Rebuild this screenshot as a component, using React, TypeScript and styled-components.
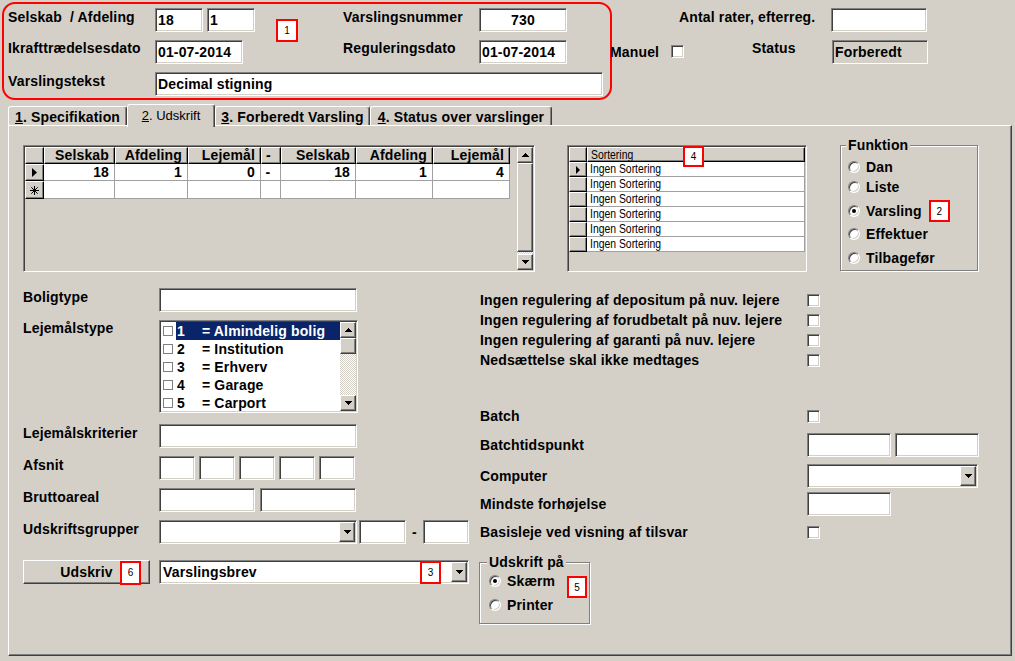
import React from 'react'
import styled, { createGlobalStyle, css } from 'styled-components'

const FACE = '#d4d0c8'
const SHADOW = '#808080'
const DARK = '#404040'
const GRIDLINE = '#a0a0a0'

const GlobalStyle = createGlobalStyle`
  html, body {
    margin: 0;
    padding: 0;
    background: ${FACE};
  }
  body {
    font-family: "Liberation Sans", Arial, sans-serif;
    font-size: 14px;
    font-weight: bold;
    letter-spacing: 0.15px;
    color: #000;
  }
`

// classic 3D edges
const sunken = css`
  box-sizing: border-box;
  border: 1px solid;
  border-color: ${SHADOW} #fff #fff ${SHADOW};
  box-shadow: inset 1px 1px 0 ${DARK}, inset -1px -1px 0 ${FACE};
`

const raised = css`
  box-sizing: border-box;
  border: 1px solid;
  border-color: #fff ${DARK} ${DARK} #fff;
  box-shadow: inset -1px -1px 0 ${SHADOW};
  background: ${FACE};
`

const Window = styled.div`
  width: 1015px;
  height: 661px;
  overflow: hidden;
  background: ${FACE};
`

/* ---------- header ---------- */

const Header = styled.div`
  box-sizing: border-box;
  display: flex;
  height: 104px;
  padding: 2px 0 0 2px;
`

const RedFrame = styled.div`
  box-sizing: border-box;
  width: 610px;
  height: 98px;
  border: 2px solid #ff0000;
  border-radius: 13px;
  padding: 4px 0 0 4px;
  display: flex;
  flex-direction: column;
  gap: 8px;
`

const FieldRow = styled.div<{ $pl?: number }>`
  display: flex;
  align-items: flex-start;
  height: 24px;
  padding-left: ${(p) => p.$pl ?? 0}px;
`

const Label = styled.div<{ $w: number; $ml?: number; $pt?: number }>`
  width: ${(p) => p.$w}px;
  margin-left: ${(p) => p.$ml ?? 0}px;
  padding-top: ${(p) => p.$pt ?? 1}px;
  flex-shrink: 0;
  line-height: 16px;
  white-space: pre;
`

const TextBox = styled.div<{ $w: number; $ml?: number; $align?: string; $gray?: boolean }>`
  ${sunken};
  width: ${(p) => p.$w}px;
  height: 24px;
  margin-left: ${(p) => p.$ml ?? 0}px;
  flex-shrink: 0;
  padding: 0 2px;
  background: ${(p) => (p.$gray ? FACE : '#fff')};
  line-height: 22px;
  text-align: ${(p) => p.$align ?? 'left'};
  white-space: nowrap;
  overflow: hidden;
`

const Badge = styled.div<{ $w?: number; $h?: number; $ml?: number; $mt?: number }>`
  box-sizing: border-box;
  width: ${(p) => p.$w ?? 22}px;
  height: ${(p) => p.$h ?? 23}px;
  margin-left: ${(p) => p.$ml ?? 0}px;
  margin-top: ${(p) => p.$mt ?? 0}px;
  flex-shrink: 0;
  border: 2px solid #ff0000;
  background: #fff;
  font-family: "Liberation Sans", Arial, sans-serif;
  font-size: 10px;
  font-weight: normal;
  letter-spacing: 0;
  display: flex;
  align-items: center;
  justify-content: center;
`

const OverBadge = styled(Badge)<{ $left?: number; $right?: number; $top: number }>`
  position: absolute;
  top: ${(p) => p.$top}px;
  ${(p) => (p.$left !== undefined ? `left: ${p.$left}px;` : '')}
  ${(p) => (p.$right !== undefined ? `right: ${p.$right}px;` : '')}
  margin: 0;
  z-index: 2;
`

const RightGroup = styled.div`
  display: flex;
  flex-direction: column;
  gap: 8px;
  margin-left: -2px;
  padding-top: 6px;
`

const Check = styled.div<{ $mt?: number }>`
  ${sunken};
  width: 13px;
  height: 13px;
  margin-top: ${(p) => p.$mt ?? 0}px;
  flex-shrink: 0;
  background: #fff;
`

/* ---------- tabs ---------- */

const TabStrip = styled.div`
  display: flex;
  align-items: flex-end;
  height: 21px;
  padding-left: 8px;
  position: relative;
  z-index: 1;
`

const Tab = styled.div<{ $w: number; $active?: boolean }>`
  box-sizing: border-box;
  width: ${(p) => p.$w}px;
  height: ${(p) => (p.$active ? 23 : 19)}px;
  margin-bottom: ${(p) => (p.$active ? -2 : 0)}px;
  border-top: 1px solid #fff;
  border-left: 1px solid #fff;
  border-right: 1px solid ${DARK};
  box-shadow: inset -1px 0 0 ${SHADOW};
  border-radius: 3px 3px 0 0;
  background: ${FACE};
  padding-top: ${(p) => (p.$active ? 3 : 2)}px;
  line-height: 16px;
  text-align: center;
  white-space: nowrap;
  font-size: ${(p) => (p.$active ? 13 : 14)}px;
  font-weight: ${(p) => (p.$active ? 'normal' : 'bold')};
  letter-spacing: ${(p) => (p.$active ? 0 : 0.15)}px;
`

const Hot = styled.span`
  text-decoration: underline;
`

const Panel = styled.div`
  box-sizing: border-box;
  margin-left: 8px;
  width: 1004px;
  height: 531px;
  border: 1px solid;
  border-color: #fff ${DARK} ${DARK} #fff;
  box-shadow: inset -1px -1px 0 ${SHADOW};
  padding: 19px 0 0 14px;
`

/* ---------- top section: grids + funktion ---------- */

const SectionA = styled.div`
  display: flex;
  align-items: flex-start;
  height: 127px;
`

const RangeGrid = styled.div`
  ${sunken};
  padding: 1px;
  width: 512px;
  height: 127px;
  display: flex;
`

const RangeTable = styled.div`
  display: grid;
  grid-template-columns: 19px 71px 73px 73px 20px 75px 77px 77px;
  grid-template-rows: 17px 17px 18px;
  align-content: start;
  width: 485px;
`

const HeadCell = styled.div<{ $align?: string }>`
  ${raised};
  border-color: #fff #000 #000 #fff;
  padding-right: 5px;
  line-height: 15px;
  text-align: ${(p) => p.$align ?? 'right'};
  white-space: nowrap;
`

const RowHead = styled.div`
  ${raised};
  border-color: #fff #000 #000 #fff;
  display: flex;
  align-items: center;
  justify-content: center;
`

const DataCell = styled.div<{ $align?: string }>`
  box-sizing: border-box;
  background: #fff;
  border-right: 1px solid ${GRIDLINE};
  border-bottom: 1px solid ${GRIDLINE};
  padding-right: 5px;
  line-height: 16px;
  text-align: ${(p) => p.$align ?? 'right'};
`

const VScroll = styled.div`
  display: flex;
  flex-direction: column;
  width: 16px;
  flex-shrink: 0;
  margin-left: auto;
`

const ScrollBtn = styled.div`
  ${raised};
  height: 16px;
  flex-shrink: 0;
  display: flex;
  align-items: center;
  justify-content: center;
`

const ScrollThumb = styled.div<{ $h?: number }>`
  ${raised};
  ${(p) => (p.$h ? `height: ${p.$h}px; flex-shrink: 0;` : 'flex: 1;')}
`

const ScrollTrack = styled.div<{ $h?: number }>`
  ${(p) => (p.$h ? `height: ${p.$h}px; flex-shrink: 0;` : 'flex: 1;')}
  background-image: repeating-conic-gradient(#fff 0% 25%, ${FACE} 0% 50%);
  background-size: 2px 2px;
`

const SortGrid = styled.div`
  ${sunken};
  padding: 1px;
  margin-left: 32px;
  width: 240px;
  height: 127px;
  font-size: 13px;
  font-weight: normal;
  letter-spacing: 0;
`

const SortTable = styled.div`
  display: grid;
  grid-template-columns: 18px 218px;
  grid-auto-rows: 15px;
`

const SortHead = styled.div`
  ${raised};
  border-color: #fff #000 #000 #fff;
  position: relative;
  padding-left: 3px;
  line-height: 13px;
`

const SortCell = styled.div`
  box-sizing: border-box;
  background: #fff;
  border-right: 1px solid ${GRIDLINE};
  border-bottom: 1px solid ${GRIDLINE};
  padding-left: 3px;
  line-height: 14px;
`

// the grid uses a condensed face; squeeze the regular one to its width
const Narrow = styled.span`
  display: inline-block;
  transform: scaleX(0.8);
  transform-origin: left center;
  white-space: nowrap;
`

const GroupBox = styled.div<{ $w: number; $h: number; $ml?: number; $mt?: number; $pl: number }>`
  box-sizing: border-box;
  width: ${(p) => p.$w}px;
  height: ${(p) => p.$h}px;
  margin-left: ${(p) => p.$ml ?? 0}px;
  margin-top: ${(p) => p.$mt ?? 0}px;
  flex-shrink: 0;
  border: 1px solid ${SHADOW};
  box-shadow: inset 1px 1px 0 #fff, 1px 1px 0 #fff;
  padding-left: ${(p) => p.$pl}px;
  display: flex;
  flex-direction: column;
`

const Legend = styled.div`
  align-self: flex-start;
  margin: -9px 0 0 -2px;
  padding: 0 2px;
  background: ${FACE};
  line-height: 16px;
  white-space: nowrap;
`

const RadioRow = styled.div<{ $mt?: number }>`
  display: flex;
  align-items: center;
  gap: 6px;
  height: 20px;
  margin-top: ${(p) => p.$mt ?? 0}px;
`

const Radio = styled.div<{ $on?: boolean }>`
  box-sizing: border-box;
  width: 12px;
  height: 12px;
  flex-shrink: 0;
  border-radius: 50%;
  border: 1px solid;
  border-color: ${SHADOW} #fff #fff ${SHADOW};
  box-shadow: inset 1px 1px 0 ${DARK}, inset -1px -1px 0 ${FACE};
  background: #fff;
  display: flex;
  align-items: center;
  justify-content: center;

  &::after {
    content: '';
    width: 4px;
    height: 4px;
    border-radius: 50%;
    background: ${(p) => (p.$on ? '#000' : 'transparent')};
  }
`

/* ---------- middle section ---------- */

const SectionB = styled.div`
  display: flex;
  margin-top: 16px;
`

const LeftCol = styled.div`
  width: 457px;
  flex-shrink: 0;
  display: flex;
  flex-direction: column;
`

const RightCol = styled.div`
  display: flex;
  flex-direction: column;
  padding-top: 2px;
`

const FormRow = styled.div<{ $mt?: number }>`
  display: flex;
  align-items: flex-start;
  margin-top: ${(p) => p.$mt ?? 0}px;
`

const OptRow = styled.div<{ $mt?: number; $h?: number }>`
  display: flex;
  align-items: center;
  height: ${(p) => p.$h ?? 20}px;
  margin-top: ${(p) => p.$mt ?? 0}px;
`

const Boxes = styled.div<{ $gap: number }>`
  display: flex;
  gap: ${(p) => p.$gap}px;
`

const ListBox = styled.div`
  ${sunken};
  padding: 1px;
  width: 199px;
  height: 93px;
  background: #fff;
  display: flex;
`

const ListItems = styled.div`
  flex: 1;
  display: flex;
  flex-direction: column;
`

const ListItem = styled.div`
  display: flex;
  align-items: center;
  height: 18px;
`

const MiniCheck = styled.div`
  box-sizing: border-box;
  width: 10px;
  height: 10px;
  margin: 0 3px 0 2px;
  flex-shrink: 0;
  border: 1px solid ${SHADOW};
  background: #fff;
`

const ItemText = styled.div<{ $sel?: boolean }>`
  flex: 1;
  height: 18px;
  line-height: 18px;
  padding-left: 1px;
  display: flex;
  white-space: pre;
  background: ${(p) => (p.$sel ? '#0a246a' : 'transparent')};
  color: ${(p) => (p.$sel ? '#fff' : '#000')};
`

const ItemNo = styled.span`
  width: 25px;
`

const Combo = styled.div<{ $w: number; $ml?: number }>`
  ${sunken};
  padding: 1px;
  width: ${(p) => p.$w}px;
  height: 24px;
  margin-left: ${(p) => p.$ml ?? 0}px;
  flex-shrink: 0;
  background: #fff;
  display: flex;
  position: relative;
`

const ComboText = styled.div`
  flex: 1;
  padding-left: 2px;
  line-height: 20px;
  white-space: nowrap;
`

const DropBtn = styled.div`
  ${raised};
  width: 16px;
  flex-shrink: 0;
  display: flex;
  align-items: center;
  justify-content: center;
`

const Dash = styled.div`
  width: 17px;
  line-height: 24px;
  text-align: center;
`

/* ---------- bottom section ---------- */

const SectionC = styled.div`
  display: flex;
  align-items: flex-start;
  margin-top: 16px;
`

const PushButton = styled.div`
  ${raised};
  position: relative;
  width: 127px;
  height: 24px;
  line-height: 22px;
  text-align: center;
`

const GroupBody = styled.div`
  display: flex;
`

const RadioList = styled.div`
  display: flex;
  flex-direction: column;
  width: 78px;
  margin-top: 1px;
`

/* ---------- drawings ---------- */

const RowMark = ({ size = 9 }: { size?: number }) => (
  <svg width={Math.ceil(size / 2) + 1} height={size} viewBox={`0 0 ${Math.ceil(size / 2) + 1} ${size}`}>
    <path d={`M0 0 L${Math.ceil(size / 2)} ${size / 2} L0 ${size} Z`} fill="#000" />
  </svg>
)

const NewMark = () => (
  <svg width="9" height="9" viewBox="0 0 9 9" stroke="#000" strokeWidth="1">
    <path d="M4.5 0 V9 M0 4.5 H9 M1.3 1.3 L7.7 7.7 M7.7 1.3 L1.3 7.7" />
  </svg>
)

const Arrow = ({ dir }: { dir: 'up' | 'down' }) => (
  <svg width="7" height="4" viewBox="0 0 7 4" shapeRendering="crispEdges">
    <path
      d={dir === 'up' ? 'M3 0h1v1h1v1h1v1h1v1H0V3h1V2h1V1h1z' : 'M0 0h7v1H6v1H5v1H4v1H3V3H2V2H1V1H0z'}
      fill="#000"
    />
  </svg>
)

const rangeHeads = ['Selskab', 'Afdeling', 'Lejemål', '-', 'Selskab', 'Afdeling', 'Lejemål']
const rangeValues = ['18', '1', '0', '-', '18', '1', '4']

const lejemaal = [
  ['1', '= Almindelig bolig'],
  ['2', '= Institution'],
  ['3', '= Erhverv'],
  ['4', '= Garage'],
  ['5', '= Carport'],
]

const funktioner = [
  { name: 'Dan', mt: 4 },
  { name: 'Liste', mt: 0 },
  { name: 'Varsling', mt: 4, on: true },
  { name: 'Effektuer', mt: 3 },
  { name: 'Tilbagefør', mt: 4 },
]

const optioner = [
  'Ingen regulering af depositum på nuv. lejere',
  'Ingen regulering af forudbetalt på nuv. lejere',
  'Ingen regulering af garanti på nuv. lejere',
  'Nedsættelse skal ikke medtages',
]

export default function App() {
  return (
    <Window>
      <GlobalStyle />

      <Header>
        <RedFrame>
          <FieldRow>
            <Label $w={147}>{'Selskab  / Afdeling'}</Label>
            <TextBox $w={48}>18</TextBox>
            <TextBox $w={48} $ml={4}>1</TextBox>
            <Badge $ml={21} $mt={11}>1</Badge>
            <Label $w={136} $ml={45}>Varslingsnummer</Label>
            <TextBox $w={88} $align="center">730</TextBox>
          </FieldRow>
          <FieldRow>
            <Label $w={147} $pt={0}>Ikrafttrædelsesdato</Label>
            <TextBox $w={88}>01-07-2014</TextBox>
            <Label $w={136} $ml={100} $pt={0}>Reguleringsdato</Label>
            <TextBox $w={88}>01-07-2014</TextBox>
          </FieldRow>
          <FieldRow>
            <Label $w={147}>Varslingstekst</Label>
            <TextBox $w={448}>Decimal stigning</TextBox>
          </FieldRow>
        </RedFrame>

        <RightGroup>
          <FieldRow $pl={69}>
            <Label $w={152}>Antal rater, efterreg.</Label>
            <TextBox $w={96} />
          </FieldRow>
          <FieldRow>
            <Label $w={61} $pt={4}>Manuel</Label>
            <Check $mt={5} />
            <Label $w={80} $ml={68} $pt={0}>Status</Label>
            <TextBox $w={96} $gray>Forberedt</TextBox>
          </FieldRow>
        </RightGroup>
      </Header>

      <TabStrip>
        <Tab $w={119}><Hot>1</Hot>. Specifikation</Tab>
        <Tab $w={88} $active><Hot>2</Hot>. Udskrift</Tab>
        <Tab $w={155}><Hot>3</Hot>. Forberedt Varsling</Tab>
        <Tab $w={182}><Hot>4</Hot>. Status over varslinger</Tab>
      </TabStrip>

      <Panel>
        <SectionA>
          <RangeGrid>
            <RangeTable>
              <RowHead />
              {rangeHeads.map((h, i) => (
                <HeadCell key={i} $align={h === '-' ? 'center' : 'right'}>{h}</HeadCell>
              ))}
              <RowHead><RowMark /></RowHead>
              {rangeValues.map((v, i) => (
                <DataCell key={i} $align={v === '-' ? 'center' : 'right'}>{v}</DataCell>
              ))}
              <RowHead><NewMark /></RowHead>
              {rangeValues.map((_, i) => (
                <DataCell key={i} />
              ))}
            </RangeTable>
            <VScroll>
              <ScrollBtn><Arrow dir="up" /></ScrollBtn>
              <ScrollThumb />
              <ScrollTrack $h={2} />
              <ScrollBtn><Arrow dir="down" /></ScrollBtn>
            </VScroll>
          </RangeGrid>

          <SortGrid>
            <SortTable>
              <SortHead />
              <SortHead>
                <Narrow>Sortering</Narrow>
                <OverBadge $left={95} $top={-2} $w={21} $h={21}>4</OverBadge>
              </SortHead>
              {Array.from({ length: 6 }).map((_, i) => (
                <React.Fragment key={i}>
                  <RowHead>{i === 0 && <RowMark size={8} />}</RowHead>
                  <SortCell><Narrow>Ingen Sortering</Narrow></SortCell>
                </React.Fragment>
              ))}
            </SortTable>
          </SortGrid>

          <GroupBox $w={138} $h={126} $ml={33} $pl={7}>
            <Legend>Funktion</Legend>
            {funktioner.map((f) => (
              <RadioRow key={f.name} $mt={f.mt}>
                <Radio $on={f.on} />
                {f.name}
                {f.on && <Badge $w={21} $h={22} $ml={1}>2</Badge>}
              </RadioRow>
            ))}
          </GroupBox>
        </SectionA>

        <SectionB>
          <LeftCol>
            <FormRow>
              <Label $w={136}>Boligtype</Label>
              <TextBox $w={198} />
            </FormRow>
            <FormRow $mt={8}>
              <Label $w={136} $pt={0}>Lejemålstype</Label>
              <ListBox>
                <ListItems>
                  {lejemaal.map(([no, txt], i) => (
                    <ListItem key={no}>
                      <MiniCheck />
                      <ItemText $sel={i === 0}>
                        <ItemNo>{no}</ItemNo>
                        {txt}
                      </ItemText>
                    </ListItem>
                  ))}
                </ListItems>
                <VScroll>
                  <ScrollBtn><Arrow dir="up" /></ScrollBtn>
                  <ScrollThumb $h={16} />
                  <ScrollTrack />
                  <ScrollBtn><Arrow dir="down" /></ScrollBtn>
                </VScroll>
              </ListBox>
            </FormRow>
            <FormRow $mt={11}>
              <Label $w={136}>Lejemålskriterier</Label>
              <TextBox $w={198} />
            </FormRow>
            <FormRow $mt={8}>
              <Label $w={136}>Afsnit</Label>
              <Boxes $gap={4}>
                {[0, 1, 2, 3, 4].map((i) => (
                  <TextBox key={i} $w={36} />
                ))}
              </Boxes>
            </FormRow>
            <FormRow $mt={8}>
              <Label $w={136}>Bruttoareal</Label>
              <Boxes $gap={5}>
                <TextBox $w={96} />
                <TextBox $w={96} />
              </Boxes>
            </FormRow>
            <FormRow $mt={8}>
              <Label $w={136}>Udskriftsgrupper</Label>
              <Combo $w={198}>
                <ComboText />
                <DropBtn><Arrow dir="down" /></DropBtn>
              </Combo>
              <TextBox $w={47} $ml={2} />
              <Dash>-</Dash>
              <TextBox $w={46} />
            </FormRow>
          </LeftCol>

          <RightCol>
            {optioner.map((o) => (
              <OptRow key={o}>
                <Label $w={327} $pt={0}>{o}</Label>
                <Check />
              </OptRow>
            ))}
            <OptRow $mt={36}>
              <Label $w={327} $pt={0}>Batch</Label>
              <Check />
            </OptRow>
            <OptRow $mt={7} $h={24}>
              <Label $w={327} $pt={0}>Batchtidspunkt</Label>
              <Boxes $gap={4}>
                <TextBox $w={84} />
                <TextBox $w={84} />
              </Boxes>
            </OptRow>
            <OptRow $mt={7} $h={24}>
              <Label $w={327} $pt={0}>Computer</Label>
              <Combo $w={171}>
                <ComboText />
                <DropBtn><Arrow dir="down" /></DropBtn>
              </Combo>
            </OptRow>
            <OptRow $mt={4} $h={24}>
              <Label $w={327} $pt={0}>Mindste forhøjelse</Label>
              <TextBox $w={84} />
            </OptRow>
            <OptRow $mt={6}>
              <Label $w={327} $pt={0}>Basisleje ved visning af tilsvar</Label>
              <Check />
            </OptRow>
          </RightCol>
        </SectionB>

        <SectionC>
          <PushButton>
            Udskriv
            <OverBadge $left={96} $top={0} $w={21} $h={24}>6</OverBadge>
          </PushButton>
          <Combo $w={310} $ml={9}>
            <ComboText>Varslingsbrev</ComboText>
            <OverBadge $right={27} $top={0} $w={21} $h={23}>3</OverBadge>
            <DropBtn><Arrow dir="down" /></DropBtn>
          </Combo>
          <GroupBox $w={111} $h={62} $ml={10} $mt={2} $pl={9}>
            <Legend>Udskrift på</Legend>
            <GroupBody>
              <RadioList>
                <RadioRow>
                  <Radio $on />
                  Skærm
                </RadioRow>
                <RadioRow $mt={4}>
                  <Radio />
                  Printer
                </RadioRow>
              </RadioList>
              <Badge $w={20} $h={22} $mt={6}>5</Badge>
            </GroupBody>
          </GroupBox>
        </SectionC>
      </Panel>
    </Window>
  )
}
